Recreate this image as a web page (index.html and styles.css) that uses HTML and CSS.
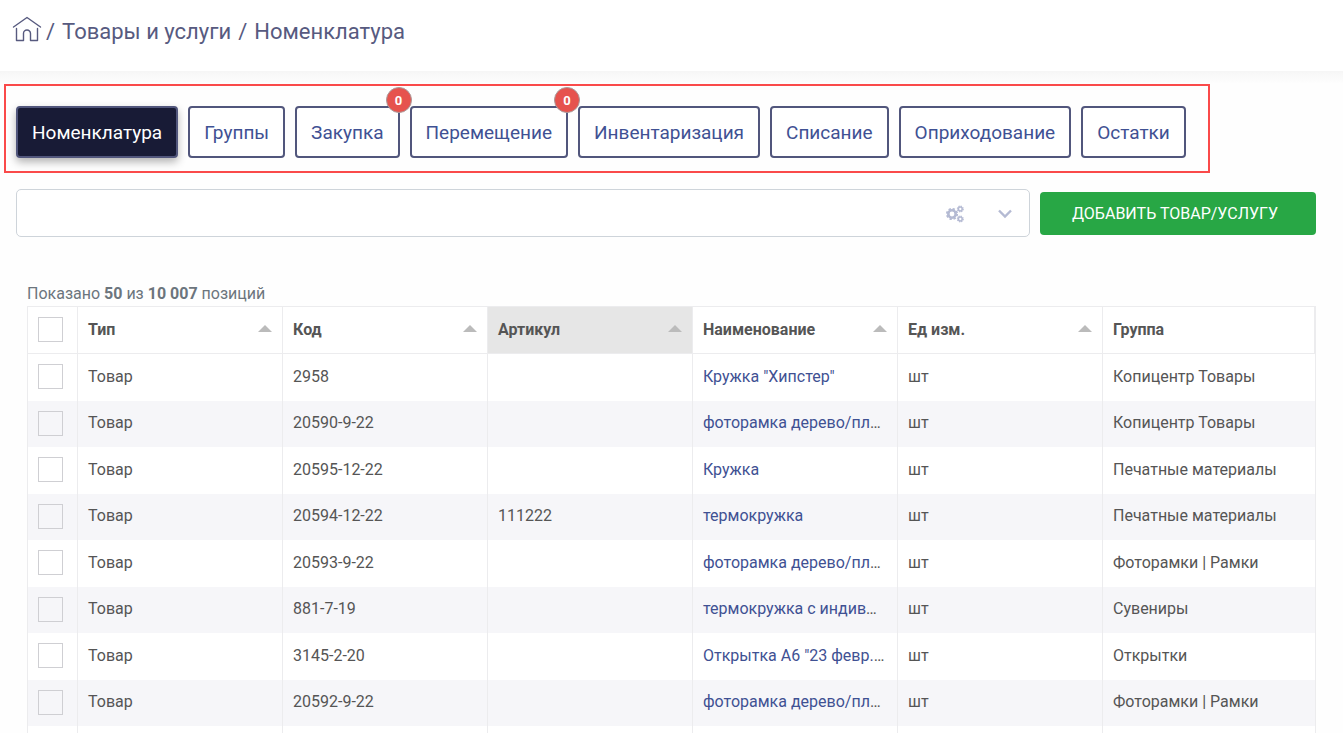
FILE: index.html
```html
<!DOCTYPE html>
<html lang="ru">
<head>
<meta charset="utf-8">
<title>Номенклатура</title>
<link rel="stylesheet" href="styles.css">
</head>
<body>
<header class="header">
  <a class="home" href="#" aria-label="Главная"><svg width="30" height="26" viewBox="0 0 30 26" fill="none" stroke="currentColor" stroke-width="1.4" stroke-linejoin="round" stroke-linecap="round"><path d="M1.500 11 15 1.500 28.500 11"/><path d="M4.500 12.500V24.500H11.500V17.500a3.500 3.500 0 0 1 7 0V24.500H25.500V12.500"/></svg></a>
  <h1 class="title"><span>/</span><span>Товары и услуги</span><span>/</span><span>Номенклатура</span></h1>
</header>
<main class="main">
  <nav class="tabs">
    <a class="tab tab-active" href="#">Номенклатура</a>
    <a class="tab" href="#">Группы</a>
    <a class="tab" href="#">Закупка<span class="badge">0</span></a>
    <a class="tab" href="#">Перемещение<span class="badge">0</span></a>
    <a class="tab" href="#">Инвентаризация</a>
    <a class="tab" href="#">Списание</a>
    <a class="tab" href="#">Оприходование</a>
    <a class="tab" href="#">Остатки</a>
  </nav>
  <div class="toolbar">
    <div class="search">
      <input class="search-input" type="text" aria-label="Поиск">
      <button class="icon-btn" type="button" aria-label="Настройки"><svg width="18" height="18" viewBox="0 0 18 18" fill="none" stroke="currentColor"><circle cx="6" cy="9" r="3.700" stroke-width="2.600"/><circle cx="6" cy="9" r="5.200" stroke-width="1.800" stroke-dasharray="2.300 1.784"/><circle cx="14.300" cy="4" r="1.900" stroke-width="1.500"/><circle cx="14.300" cy="4" r="2.900" stroke-width="1.200" stroke-dasharray="1.300 0.978"/><circle cx="14.300" cy="14" r="1.900" stroke-width="1.500"/><circle cx="14.300" cy="14" r="2.900" stroke-width="1.200" stroke-dasharray="1.300 0.978"/></svg></button>
      <button class="icon-btn" type="button" aria-label="Развернуть"><svg width="14" height="10" viewBox="0 0 14 10" fill="none" stroke="currentColor" stroke-width="2.400"><path d="M1 1.500 7 7.500 13 1.500"/></svg></button>
    </div>
    <button class="add-btn" type="button">ДОБАВИТЬ ТОВАР/УСЛУГУ</button>
  </div>
  <section class="list">
    <p class="summary">Показано <b>50</b> из <b>10 007</b> позиций</p>
    <table class="grid">
      <colgroup><col class="col-check"><col class="col-data"><col class="col-data"><col class="col-data"><col class="col-data"><col class="col-data"><col></colgroup>
      <thead>
        <tr>
          <th class="check-head"><input class="check" type="checkbox" aria-label="Выбрать все"></th>
          <th><div class="head">Тип<i class="sort"></i></div></th>
          <th><div class="head">Код<i class="sort"></i></div></th>
          <th class="sorted"><div class="head">Артикул<i class="sort"></i></div></th>
          <th><div class="head">Наименование<i class="sort"></i></div></th>
          <th><div class="head">Ед изм.<i class="sort"></i></div></th>
          <th>Группа</th>
        </tr>
      </thead>
      <tbody>
        <tr><td><input class="check" type="checkbox" aria-label="Выбрать 2958"></td><td>Товар</td><td>2958</td><td></td><td><a href="#">Кружка "Хипстер"</a></td><td>шт</td><td>Копицентр Товары</td></tr>
        <tr><td><input class="check" type="checkbox" aria-label="Выбрать 20590-9-22"></td><td>Товар</td><td>20590-9-22</td><td></td><td><a href="#">фоторамка дерево/пл</a>…</td><td>шт</td><td>Копицентр Товары</td></tr>
        <tr><td><input class="check" type="checkbox" aria-label="Выбрать 20595-12-22"></td><td>Товар</td><td>20595-12-22</td><td></td><td><a href="#">Кружка</a></td><td>шт</td><td>Печатные материалы</td></tr>
        <tr><td><input class="check" type="checkbox" aria-label="Выбрать 20594-12-22"></td><td>Товар</td><td>20594-12-22</td><td>111222</td><td><a href="#">термокружка</a></td><td>шт</td><td>Печатные материалы</td></tr>
        <tr><td><input class="check" type="checkbox" aria-label="Выбрать 20593-9-22"></td><td>Товар</td><td>20593-9-22</td><td></td><td><a href="#">фоторамка дерево/пл</a>…</td><td>шт</td><td>Фоторамки | Рамки</td></tr>
        <tr><td><input class="check" type="checkbox" aria-label="Выбрать 881-7-19"></td><td>Товар</td><td>881-7-19</td><td></td><td><a href="#">термокружка с индив</a>…</td><td>шт</td><td>Сувениры</td></tr>
        <tr><td><input class="check" type="checkbox" aria-label="Выбрать 3145-2-20"></td><td>Товар</td><td>3145-2-20</td><td></td><td><a href="#">Открытка А6 "23 февр.</a>…</td><td>шт</td><td>Открытки</td></tr>
        <tr><td><input class="check" type="checkbox" aria-label="Выбрать 20592-9-22"></td><td>Товар</td><td>20592-9-22</td><td></td><td><a href="#">фоторамка дерево/пл</a>…</td><td>шт</td><td>Фоторамки | Рамки</td></tr>
        <tr><td></td><td></td><td></td><td></td><td></td><td></td><td></td></tr>
      </tbody>
    </table>
  </section>
</main>
</body>
</html>
```
FILE: styles.css
```css
* { box-sizing: border-box; }
html { overflow: hidden; }
body {
  margin: 0;
  height: 100vh;
  overflow: hidden;
  background: #fefefe;
  color: #555;
  font: 16px/24px Roboto, sans-serif;
}
a { color: #3f5193; text-decoration: none; }
button { font: inherit; cursor: pointer; }

.header {
  display: flex;
  align-items: flex-start;
  gap: 4px;
  padding: 16px 12px 15px;
  background: #fff;
}
.home { height: 40px; color: #575a7f; }
.home svg { display: block; }
.title {
  display: flex;
  gap: 7px;
  margin: 0;
  color: #575a7f;
  font-size: 22px;
  font-weight: 400;
  line-height: 32px;
}

.main {
  padding: 13px 27px 0 4px;
  background: linear-gradient(#f6f6f6, #fefefe 13px);
}
.tabs {
  display: flex;
  gap: 10px;
  width: fit-content;
  padding: 20px 22px 13px 10px;
  border: 2px solid #fa4a4a;
}
.tab {
  position: relative;
  padding: 11px 14px 9px;
  border: 2px solid #51567c;
  border-radius: 4px;
  background: #fff;
  font-size: 19px;
  line-height: 28px;
}
.tab-active {
  background: #181b36;
  color: #fff;
  box-shadow: 0 4px 8px rgba(0, 0, 0, .3);
}
.badge {
  position: absolute;
  top: -21px;
  right: -14px;
  width: 26px;
  height: 26px;
  border: 1px solid #a99;
  border-radius: 50%;
  background: #e6534e;
  color: #fff;
  font-size: 13px;
  font-weight: 700;
  line-height: 25px;
  text-align: center;
}

.toolbar {
  display: flex;
  align-items: center;
  gap: 10px;
  margin: 16px 0 0 12px;
}
.search {
  display: flex;
  flex: 1;
  align-items: center;
  height: 48px;
  padding-right: 7px;
  border: 1px solid #ced4da;
  border-radius: 5px;
  background: #fff;
}
.search-input {
  flex: 1;
  height: 46px;
  padding: 0 12px;
  border: 0;
  background: none;
  font: inherit;
  outline: 0;
}
.icon-btn {
  display: flex;
  align-items: center;
  justify-content: center;
  width: 34px;
  height: 36px;
  margin-left: 16px;
  padding: 2px 0 0;
  border: 0;
  background: none;
  color: #b4bad3;
}
.add-btn {
  height: 43px;
  padding: 1px 38px 0 32px;
  border: 0;
  border-radius: 4px;
  background: #28a745;
  color: #fff;
}

.list { margin: 44px 0 0 23px; }
.summary { margin: 0; color: #6c757d; line-height: 25px; }
.grid {
  width: 100%;
  border: 1px solid #ececee;
  border-collapse: separate;
  border-spacing: 0;
  table-layout: fixed;
}
.col-check { width: 50px; }
.col-data { width: 205px; }
.grid th, .grid td {
  overflow: hidden;
  padding: 0 10px;
  border-right: 1px solid #ececee;
  text-align: left;
  white-space: nowrap;
}
.grid th { height: 47px; border-bottom: 1px solid #ececee; background: #fff; }
.grid td { height: 47px; padding-bottom: 2px; background: #fff; }
.grid td:last-child { border-right: 0; }
.grid tr:nth-child(even) td { height: 46px; background: #f6f6f9; }
.grid .check-head { padding-bottom: 2px; }
.grid .sorted { background: #e6e6e6; }
.head { display: flex; align-items: center; justify-content: space-between; }
.sort {
  margin-bottom: 4px;
  border: 7px solid transparent;
  border-top: 0;
  border-bottom-color: #bbb;
}
.check {
  display: block;
  width: 25px;
  height: 25px;
  margin: 0;
  border: 1px solid #cfcfd3;
  appearance: none;
}
```
